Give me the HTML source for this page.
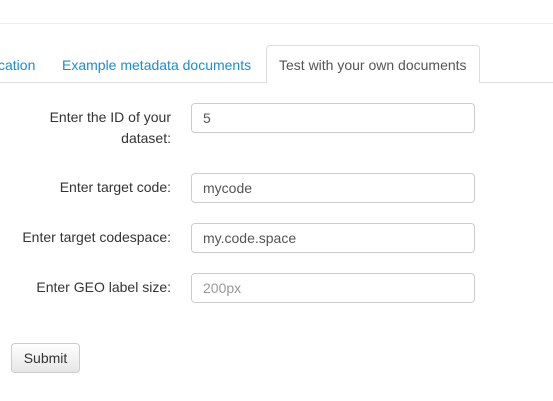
<!DOCTYPE html>
<html><head><style>
body{margin:0;width:553px;height:401px;overflow:hidden;background:#fff;font-family:"Liberation Sans",sans-serif;font-size:14px;color:#333;position:relative}
.hr{position:absolute;left:0;right:0;top:23px;border-top:1px solid #eee}
.tabline{position:absolute;left:0;right:0;top:82px;border-top:1px solid #ddd}
.tab{position:absolute;top:57px;color:#1a8dd0;white-space:nowrap}
.active{position:absolute;left:266px;top:45px;height:38px;border:1px solid #ddd;border-bottom:none;border-radius:4px 4px 0 0;background:#fff;color:#555;box-sizing:border-box;width:214px}
.active span{position:absolute;left:12px;top:11px;white-space:nowrap}
.lbl{position:absolute;right:382px;text-align:right;line-height:20px;white-space:nowrap}
.inp{position:absolute;left:191px;width:284px;height:30px;box-sizing:border-box;border:1px solid #ccc;border-radius:4px;padding:6px 11px;line-height:16px;color:#555}
.btn{position:absolute;left:11px;top:343px;width:69px;height:30px;box-sizing:border-box;border:1px solid #ccc;border-radius:4px;background:linear-gradient(#fff,#e6e6e6);text-align:center;line-height:28px;color:#333}
</style></head><body>
<div class="hr"></div>
<div class="tabline"></div>
<div class="tab" style="left:-2px">cation</div>
<div class="tab" style="left:62px">Example metadata documents</div>
<div class="active"><span>Test with your own documents</span></div>
<div class="lbl" style="top:107px;line-height:21px">Enter the ID of your<br>dataset:</div>
<div class="inp" style="top:103px">5</div>
<div class="lbl" style="top:177px">Enter target code:</div>
<div class="inp" style="top:173px">mycode</div>
<div class="lbl" style="top:227px">Enter target codespace:</div>
<div class="inp" style="top:223px">my.code.space</div>
<div class="lbl" style="top:277px">Enter GEO label size:</div>
<div class="inp" style="top:273px;color:#999">200px</div>
<div class="btn">Submit</div>
</body></html>
